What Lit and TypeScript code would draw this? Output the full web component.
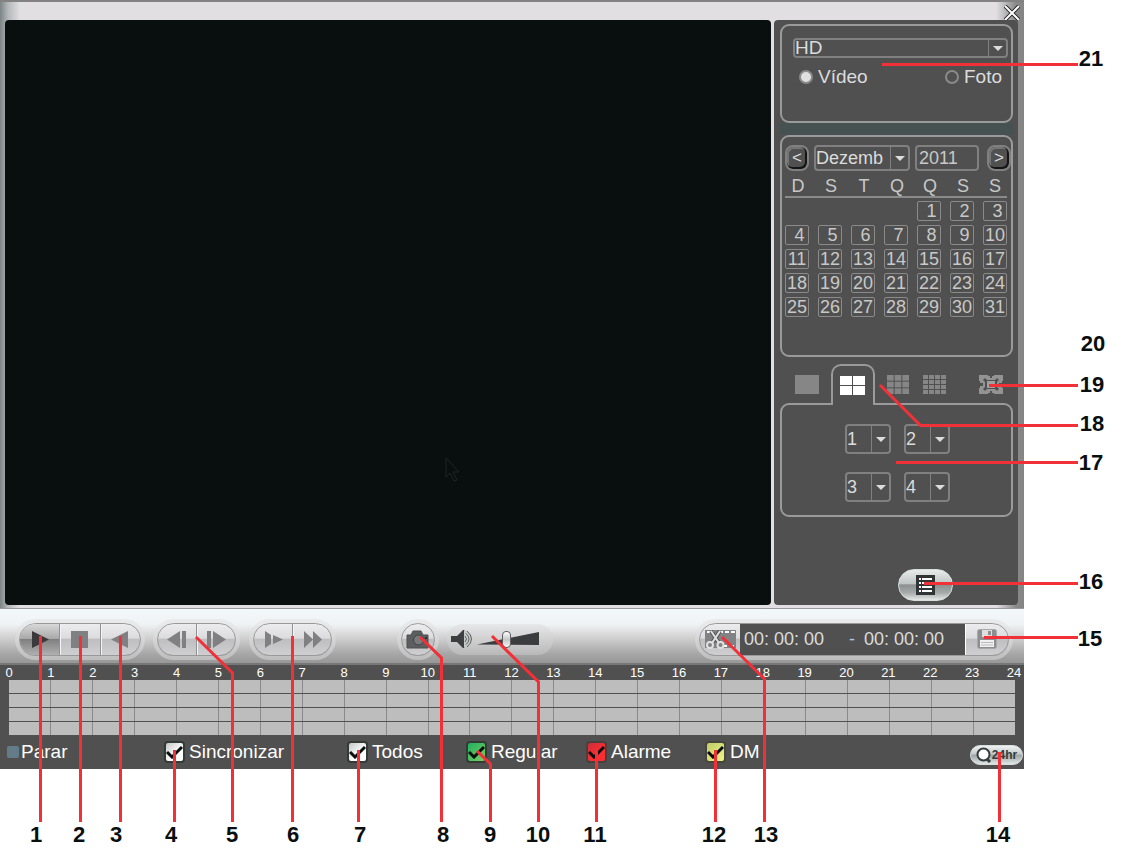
import { LitElement, html, css, svg } from "lit";
import { customElement, property } from "lit/decorators.js";
import { classMap } from "lit/directives/class-map.js";

const WEEKDAYS = ["D", "S", "T", "Q", "Q", "S", "S"];
const FIRST_WEEKDAY = 4;
const DAYS = 31;
const HOURS = Array.from({ length: 25 }, (_, i) => i);

const FILTERS = [
  { id: "sync", label: "Sincronizar", tone: "white" },
  { id: "all", label: "Todos", tone: "white" },
  { id: "regular", label: "Regular", tone: "green" },
  { id: "alarm", label: "Alarme", tone: "red" },
  { id: "motion", label: "DM", tone: "yellow" },
];

/* Leader lines and the numbers at their ends. */
const CALLOUTS = [
  { n: 1, x: 36, y: 842, line: "40.5,636 40.5,822" },
  { n: 2, x: 79, y: 842, line: "80.5,636 80.5,822" },
  { n: 3, x: 116, y: 842, line: "120.5,636 120.5,822" },
  { n: 4, x: 171, y: 842, line: "174.5,750 174.5,822" },
  { n: 5, x: 232, y: 842, line: "196,637 232.5,673 232.5,822" },
  { n: 6, x: 293, y: 842, line: "292.5,636 292.5,822" },
  { n: 7, x: 360, y: 842, line: "358.5,750 358.5,822" },
  { n: 8, x: 443, y: 842, line: "420,637 441.5,658 441.5,822" },
  { n: 9, x: 490, y: 842, line: "477,751 490.5,764 490.5,822" },
  { n: 10, x: 538, y: 842, line: "492,636 538.5,682 538.5,822" },
  { n: 11, x: 595, y: 842, line: "596.5,751 596.5,822" },
  { n: 12, x: 714, y: 842, line: "715.5,750 715.5,822" },
  { n: 13, x: 766, y: 842, line: "722,637 764.5,679 764.5,822" },
  { n: 14, x: 998, y: 842, line: "999.5,752 999.5,822" },
  { n: 15, x: 1090, y: 646, line: "984,637.5 1078,637.5" },
  { n: 16, x: 1091, y: 589, line: "924,583.5 1078,583.5" },
  { n: 17, x: 1091, y: 470, line: "896,462.5 1078,462.5" },
  { n: 18, x: 1092, y: 431, line: "880,385 920.5,425.5 1078,425.5" },
  { n: 19, x: 1092, y: 392, line: "989,385.5 1078,385.5" },
  { n: 20, x: 1093, y: 351, line: "" },
  { n: 21, x: 1091, y: 66, line: "882,64.5 1078,64.5" },
];

const base = css`
  * {
    box-sizing: border-box;
  }
  button,
  input,
  select {
    font: inherit;
    color: inherit;
    margin: 0;
    padding: 0;
    border: 0;
    background: none;
    appearance: none;
    border-radius: 0;
  }
  svg {
    display: block;
  }
`;

@customElement("dvr-select")
class DvrSelect extends LitElement {
  @property() label = "";
  @property({ type: Array }) options: string[] = [];

  static styles = [
    base,
    css`
      :host {
        display: grid;
        border: 2px solid #808080;
        border-radius: 4px;
        color: #dcdcdc;
      }
      .field {
        grid-area: 1 / 1;
        width: 100%;
        min-width: 0;
        line-height: 16px;
        outline: none;
      }
      .arrow {
        grid-area: 1 / 1;
        justify-self: end;
        display: flex;
        align-items: center;
        justify-content: center;
        width: 18px;
        border-left: 1px solid #808080;
        pointer-events: none;
      }
      .arrow::after {
        content: "";
        border: 5px solid transparent;
        border-top-color: #dcdcdc;
        border-bottom-width: 0;
      }
    `,
  ];

  render() {
    return html`
      <select class="field" aria-label=${this.label}>
        ${this.options.map((o) => html`<option>${o}</option>`)}
      </select>
      <span class="arrow"></span>
    `;
  }
}

@customElement("dvr-calendar")
class DvrCalendar extends LitElement {
  static styles = [
    base,
    css`
      :host {
        display: block;
        color: #c8c8c8;
        font-size: 18px;
      }
      .nav {
        display: flex;
        gap: 5px;
        height: 26px;
      }
      .step {
        width: 24px;
        border: 2px solid #808080;
        border-radius: 8px;
        box-shadow: inset -1px -1px 0 1px #151515, inset 1px 1px 0 1px #747474;
        font-size: 17px;
        line-height: 20px;
        color: #dcdcdc;
      }
      .next {
        margin-left: auto;
      }
      .month {
        width: 96px;
      }
      .year {
        width: 64px;
        padding-left: 2px;
        border: 2px solid #808080;
        border-radius: 4px;
      }
      .days {
        border-collapse: collapse;
      }
      .head {
        height: 26px;
        padding: 5px 7px 1px 0;
        border-bottom: 2px solid #8a8a8a;
        font-weight: 400;
        line-height: 18px;
      }
      .head:last-child {
        padding-right: 0;
      }
      .cell {
        padding: 3px 9px 1px 0;
      }
      .cell:last-child {
        padding-right: 0;
      }
      .day {
        display: block;
        width: 24px;
        height: 20px;
        border: 1px solid #8a8a8a;
        border-radius: 2px;
        line-height: 18px;
        text-align: center;
      }
      .single {
        padding-left: 5px;
      }
    `,
  ];

  render() {
    const weeks = Array.from({ length: 5 }, (_, w) =>
      WEEKDAYS.map((_, d) => w * 7 + d - FIRST_WEEKDAY + 1)
    );
    return html`
      <div class="nav">
        <button class="step" aria-label="Mês anterior">&lt;</button>
        <dvr-select class="month" label="Mês" .options=${["Dezemb"]}></dvr-select>
        <input class="year" aria-label="Ano" value="2011" />
        <button class="step next" aria-label="Próximo mês">&gt;</button>
      </div>
      <table class="days">
        <thead>
          <tr>
            ${WEEKDAYS.map((d) => html`<th class="head">${d}</th>`)}
          </tr>
        </thead>
        <tbody>
          ${weeks.map(
            (week) => html`<tr>
              ${week.map(
                (day) => html`<td class="cell">
                  ${day > 0 && day <= DAYS
                    ? html`<button class=${classMap({ day: true, single: day < 10 })}>${day}</button>`
                    : ""}
                </td>`
              )}
            </tr>`
          )}
        </tbody>
      </table>
    `;
  }
}

@customElement("dvr-side")
class DvrSide extends LitElement {
  static styles = [
    base,
    css`
      :host {
        display: flex;
        flex-direction: column;
        padding: 4px 5px 4px 6px;
        border-radius: 4px;
        background: #505050;
        color: #dcdcdc;
        font-size: 19px;
      }
      .group {
        border: 2px solid #9a9a9a;
        border-radius: 9px;
      }
      .source {
        height: 99px;
        padding: 12px 3px 0 11px;
      }
      .device {
        height: 20px;
      }
      .media {
        display: flex;
        justify-content: space-between;
        padding: 8px 6px 0;
      }
      .choice {
        display: flex;
        align-items: center;
        gap: 5px;
        line-height: 22px;
      }
      .radio {
        width: 14px;
        height: 14px;
        border: 2px solid #8a8a8a;
        border-radius: 50%;
      }
      .radio:checked {
        background: #e0e0e0;
      }
      .gap {
        height: 12px;
        background: #465151;
      }
      .dates {
        height: 222px;
        padding: 8px 0 0 3px;
      }
      .tabs {
        display: flex;
        align-items: center;
        gap: 12px;
        height: 41px;
        margin: 7px 0 -2px;
        padding: 0 10px 0 15px;
        z-index: 1;
      }
      .tab {
        width: 24px;
        color: #868686;
      }
      .tab.active {
        width: 44px;
        height: 41px;
        padding: 0 0 1px 7px;
        border: 2px solid #9a9a9a;
        border-bottom: 0;
        border-radius: 10px 10px 0 0;
        background: #505050;
        color: #fff;
      }
      .tab.full {
        margin-left: auto;
      }
      .channels {
        display: grid;
        grid-template-columns: 46px 46px;
        grid-auto-rows: 30px;
        gap: 18px 13px;
        justify-content: center;
        height: 114px;
        padding: 19px 0 0 2px;
        font-size: 18px;
      }
      .list {
        display: grid;
        place-items: center;
        align-self: flex-end;
        width: 55px;
        height: 32px;
        margin: auto 60px 0 0;
        border: 1px solid #d8dede;
        border-radius: 16px;
        background: linear-gradient(#e8eceb, #c0c6c5 45%, #8c9190 50%, #a4aaa9 75%, #e4e8e7);
      }
    `,
  ];

  private tiles(cols: number, rows: number, w: number) {
    const cw = (w - (cols - 1)) / cols;
    const ch = (19 - (rows - 1)) / rows;
    return html`<svg width="25" height="19" viewBox="0 0 25 19" fill="currentColor">
      ${Array.from(
        { length: cols * rows },
        (_, i) => svg`<rect x=${(i % cols) * (cw + 1)} y=${Math.floor(i / cols) * (ch + 1)} width=${cw} height=${ch} />`
      )}
    </svg>`;
  }

  render() {
    return html`
      <section class="group source">
        <dvr-select class="device" label="Origem" .options=${["HD"]}></dvr-select>
        <div class="media">
          <label class="choice"><input class="radio" type="radio" name="media" checked />Vídeo</label>
          <label class="choice"><input class="radio" type="radio" name="media" />Foto</label>
        </div>
      </section>
      <div class="gap"></div>
      <section class="group dates"><dvr-calendar></dvr-calendar></section>
      <div class="tabs">
        <button class="tab" aria-label="1 canal">${this.tiles(1, 1, 24)}</button>
        <button class="tab active" aria-label="4 canais">${this.tiles(2, 2, 25)}</button>
        <button class="tab" aria-label="9 canais">${this.tiles(3, 3, 22)}</button>
        <button class="tab" aria-label="16 canais">${this.tiles(4, 4, 23)}</button>
        <button class="tab full" aria-label="Tela cheia">
          <svg width="24" height="19" viewBox="0 0 24 19">
            <rect width="24" height="19" fill="#939393" />
            <path d="M9 0h6v1h-2v2h-2V1H9zM9 19h6v-1h-2v-2h-2v2H9z" fill="#505050" />
            <path d="M0 6h1v2h3v3H1v2H0zM24 6h-1v2h-3v3h3v2h1z" fill="#505050" />
            <path d="M6 3l2 2h8l2-2 2 2-2 2v5l2 2-2 2-2-2H8l-2 2-2-2 2-2V7L4 5z" fill="#505050" />
            <rect x="8" y="6" width="8" height="7" fill="#a0a0a0" />
          </svg>
        </button>
      </div>
      <section class="group channels">
        ${["1", "2", "3", "4"].map(
          (c) => html`<dvr-select label="Canal ${c}" .options=${[c]}></dvr-select>`
        )}
      </section>
      <button class="list" aria-label="Lista de arquivos">
        <svg width="19" height="20" viewBox="0 0 19 20">
          <rect width="19" height="20" fill="#303434" />
          <path d="M3 4h2M3 8h2M3 12h2M3 16h2M6 4h10M6 8h10M6 12h10M6 16h10" stroke="#fff" stroke-width="2" />
        </svg>
      </button>
    `;
  }
}

@customElement("dvr-toolbar")
class DvrToolbar extends LitElement {
  static styles = [
    base,
    css`
      :host {
        display: flex;
        align-items: center;
        height: 57px;
        padding: 6px 15px 0 19px;
        border-top: 1px solid #9a9a9a;
        border-bottom: 2px solid #777;
        background: linear-gradient(#f3f8fb, #f0f3f5 28%, #d2d2d2 52%, #a8a8a8 82%, #979797);
      }
      .pill {
        display: flex;
        height: 33px;
        overflow: hidden;
        border: 1px solid #98999b;
        border-radius: 17px;
        background: linear-gradient(#ececee, #dcdcde 45%, #bfbfc1 50%, #cfcfd1);
        outline: 4px solid rgba(224, 224, 226, 0.5);
      }
      .play {
        width: 122px;
        margin-right: 16px;
      }
      .step {
        width: 79px;
        margin-right: 17px;
      }
      .speed {
        width: 79px;
        margin-right: 69px;
      }
      .button {
        display: grid;
        flex: 1;
        place-items: center;
        color: #808082;
      }
      .button + .button {
        border-left: 1px solid #909090;
        box-shadow: inset 1px 0 0 #f4f4f4;
      }
      .pressed {
        background: linear-gradient(#d8d8d8, #a8a8a8 48%, #808080 50%, #b0b0b0);
        color: #3a3a3c;
      }
      .camera {
        width: 34px;
        margin-right: 12px;
      }
      .volume {
        display: flex;
        align-items: center;
        gap: 4px;
        width: 106px;
        height: 31px;
        padding-left: 4px;
        border-radius: 16px;
        background: rgba(215, 215, 217, 0.4);
      }
      .level {
        display: grid;
        align-items: center;
        width: 62px;
      }
      .wedge,
      .slider {
        grid-area: 1 / 1;
      }
      .slider {
        width: 100%;
        height: 17px;
      }
      .slider::-webkit-slider-thumb {
        appearance: none;
        width: 9px;
        height: 17px;
        border: 1px solid #606060;
        border-radius: 4px;
        background: linear-gradient(#fff, #c4c8c8 50%, #f4f4f4);
      }
      .clip {
        width: 310px;
        margin-left: auto;
      }
      .cut {
        flex: none;
        width: 40px;
      }
      .range {
        display: flex;
        align-items: center;
        flex: none;
        width: 225px;
        background: #505050;
        color: #dcdcdc;
        font-size: 18px;
      }
      .time {
        width: 88px;
        margin-left: 4px;
      }
      .dash {
        width: 32px;
        padding-left: 17px;
        color: #a8c8f0;
      }
      .dash + .time {
        margin-left: 0;
      }
      .save {
        border-left: 1px solid #fff;
      }
    `,
  ];

  render() {
    return html`
      <div class="pill play">
        <button class="button pressed" aria-label="Reproduzir">
          <svg width="18" height="17" viewBox="0 0 18 17" fill="currentColor"><path d="M1 0l17 8.500L1 17z" /></svg>
        </button>
        <button class="button" aria-label="Parar">
          <svg width="17" height="17" fill="currentColor"><path d="M0 0h17v17H0z" /></svg>
        </button>
        <button class="button" aria-label="Reproduzir para trás">
          <svg width="18" height="17" viewBox="0 0 18 17" fill="currentColor"><path d="M17 0L0 8.500 17 17z" /></svg>
        </button>
      </div>
      <div class="pill step">
        <button class="button" aria-label="Quadro anterior">
          <svg width="20" height="17" viewBox="0 0 20 17" fill="currentColor"><path d="M13 0L0 8.500 13 17zM15 0h4v17h-4z" /></svg>
        </button>
        <button class="button" aria-label="Próximo quadro">
          <svg width="20" height="17" viewBox="0 0 20 17" fill="currentColor"><path d="M7 0l13 8.500L7 17zM1 0h4v17H1z" /></svg>
        </button>
      </div>
      <div class="pill speed">
        <button class="button" aria-label="Lento">
          <svg width="20" height="17" viewBox="0 0 20 17" fill="currentColor"><path d="M2 0l6 4v9l-6 4zM10 4l10 4.500L10 13z" /></svg>
        </button>
        <button class="button" aria-label="Rápido">
          <svg width="19" height="17" viewBox="0 0 19 17" fill="currentColor"><path d="M1 0l9 8.500L1 17zM10 0l9 8.500-9 8.500z" /></svg>
        </button>
      </div>
      <div class="pill camera">
        <button class="button" aria-label="Capturar imagem">
          <svg width="24" height="19" viewBox="0 0 24 19">
            <path d="M1 5h4l2-4h8l2 4h5v13H1z" fill="#5c5e60" stroke="#4c4e50" />
            <circle cx="12.500" cy="10" r="5" fill="#77797b" stroke="#404244" />
            <path d="M19 7h2v2h-2z" fill="#303030" />
          </svg>
        </button>
      </div>
      <div class="volume">
        <svg width="22" height="18" viewBox="0 0 22 18">
          <path d="M0 6h6l6-6h2v18h-2l-6-6H0z" fill="#3c3e40" />
          <path d="M13 0l5 2 3 4v6l-3 4-5 2" fill="#c8caca" />
          <path d="M14 6q3 3 0 6M15 3.500q6 5.500 0 11M16 1q9 8 0 16" fill="none" stroke="#5c5e60" />
        </svg>
        <div class="level">
          <svg class="wedge" width="62" height="15" viewBox="0 0 62 15"><path d="M0 12.500L62 0v13z" fill="#3a3c3e" /></svg>
          <input class="slider" type="range" min="0" max="100" value="48" aria-label="Volume" />
        </div>
      </div>
      <div class="pill clip">
        <button class="button cut" aria-label="Cortar trecho">
          <svg width="31" height="19" viewBox="0 0 31 19">
            <path d="M0 0h31v18H0z" fill="#808284" />
            <path d="M2 2h7M14 2h4M20 2h4M26 2h4M18 16h4M25 16h4" stroke="#fff" stroke-width="2" />
            <path d="M6 1l8 12M15 1L7 13" stroke="#555" stroke-width="4" />
            <path d="M6 1l8 12M15 1L7 13" stroke="#e0e0e0" stroke-width="2" />
            <g fill="#808284" stroke="#e0e0e0" stroke-width="2"><circle cx="5" cy="15" r="3" /><circle cx="15.500" cy="15" r="3" /></g>
          </svg>
        </button>
        <div class="range">
          <input class="time" aria-label="Início" value="00: 00: 00" />
          <span class="dash">-</span>
          <input class="time" aria-label="Fim" value="00: 00: 00" />
        </div>
        <button class="button save" aria-label="Salvar">
          <svg width="20" height="20" viewBox="0 0 20 20">
            <rect x=".5" y=".5" width="19" height="19" rx="2" fill="#8c8e90" stroke="#a8a8aa" />
            <path d="M5 1h10v7H5z" fill="#dedee0" />
            <path d="M11 2h3v4h-3z" fill="#8c8e90" />
            <path d="M3 11h14v7H3z" fill="#f0f0f2" />
            <path d="M4 13.500h12M4 16h12" stroke="#b8babc" />
          </svg>
        </button>
      </div>
    `;
  }
}

@customElement("dvr-timeline")
class DvrTimeline extends LitElement {
  static styles = [
    base,
    css`
      :host {
        display: block;
        background: #505050;
        color: #fff;
      }
      .hours {
        display: flex;
        justify-content: space-between;
        height: 15px;
        padding: 0 10px 0 9px;
        font-size: 13px;
        line-height: 15px;
      }
      .hour {
        display: flex;
        justify-content: center;
        width: 0;
      }
      .tracks {
        display: grid;
        gap: 1px;
        padding: 0 9px;
      }
      .track {
        display: flex;
        height: 13px;
        background: #bdbdbd;
      }
      .slot {
        flex: 1;
        border-right: 1px solid #8a8a8a;
      }
      .slot:last-child {
        border-right: 0;
      }
      .status {
        display: grid;
        grid-template-columns: 157fr 183fr 119fr 120fr 119fr 265fr 54px;
        align-items: center;
        height: 34px;
        padding-left: 7px;
        font-size: 19px;
        line-height: 22px;
      }
      .item {
        display: flex;
        align-items: center;
        gap: 4px;
      }
      .stopped {
        gap: 2px;
      }
      .mark {
        width: 12px;
        height: 12px;
        border-radius: 2px;
        background: #647c88;
      }
      .box {
        display: grid;
      }
      .check,
      .tick {
        grid-area: 1 / 1;
      }
      .check {
        width: 21px;
        height: 22px;
        border: 2px solid #343a36;
        border-radius: 4px;
      }
      .tick {
        place-self: center;
        pointer-events: none;
      }
      .white {
        background: linear-gradient(135deg, #c4c6c6, #fff 60%);
      }
      .green {
        background: linear-gradient(135deg, #20b060, #7ccc62);
      }
      .red {
        background: linear-gradient(135deg, #c83038, #ff2c34 60%);
        border-color: #48403e;
      }
      .yellow {
        background: linear-gradient(135deg, #c0cc68, #eef488);
        border-color: #48463c;
      }
      .zoom {
        display: flex;
        align-items: center;
        justify-content: center;
        width: 53px;
        height: 20px;
        margin-top: 5px;
        border: 1px solid #d8dede;
        border-radius: 10px;
        background: linear-gradient(#f0f2f2, #c4caca 45%, #9ca2a2 50%, #e0e4e4);
        color: #343c3c;
        font-size: 12px;
        font-weight: 700;
        line-height: 16px;
      }
    `,
  ];

  render() {
    return html`
      <div class="hours">${HOURS.map((h) => html`<span class="hour">${h}</span>`)}</div>
      <div class="tracks">
        ${[0, 1, 2, 3].map(
          () => html`<div class="track">${HOURS.slice(1).map(() => html`<span class="slot"></span>`)}</div>`
        )}
      </div>
      <div class="status">
        <span class="item stopped"><span class="mark"></span>Parar</span>
        ${FILTERS.map(
          (f) => html`<label class="item">
            <span class="box">
              <input class="check ${f.tone}" type="checkbox" name=${f.id} checked />
              <svg class="tick" width="17" height="14" viewBox="0 0 17 14"><path d="M1 7l5 5L16 2" fill="none" stroke="#0a0f0e" stroke-width="3" /></svg>
            </span>
            ${f.label}
          </label>`
        )}
        <button class="zoom">
          <svg width="16" height="16" viewBox="0 0 16 16">
            <path d="M10 11l4 4" stroke="#343c3c" stroke-width="3" />
            <circle cx="7.500" cy="7.500" r="6" fill="#fff" stroke="#343c3c" stroke-width="2" />
          </svg>
          24hr
        </button>
      </div>
    `;
  }
}

@customElement("app-root")
class AppRoot extends LitElement {
  static styles = [
    base,
    css`
      :host {
        display: block;
        position: relative;
        padding: 0 98px 87px 0;
        background: #fff;
        font-family: "Liberation Sans", Arial, sans-serif;
      }
      .frame {
        border-top: 2px solid #838182;
        background: linear-gradient(to right, #7c8486, #b4b8ba 8px, #e1dfe2 20px, #e1dfe2 calc(100% - 28px), #8a898a calc(100% - 8px), #858485);
      }
      .title {
        display: flex;
        justify-content: flex-end;
        height: 18px;
        padding: 3px 4px 0 0;
      }
      .close {
        width: 16px;
        height: 16px;
      }
      .main {
        display: flex;
        gap: 3px;
        padding: 0 6px 3px 5px;
      }
      .video {
        position: relative;
        flex: 1;
        aspect-ratio: 766 / 585;
        border-radius: 4px;
        background: #090f0e;
      }
      .side {
        width: 244px;
      }
      .cursor {
        position: absolute;
        left: 57.500%;
        top: 74.700%;
      }
      .callouts {
        position: absolute;
        top: 0;
        left: 0;
        width: 100%;
        pointer-events: none;
        z-index: 2;
      }
      .leader {
        fill: none;
        stroke: #f23038;
        stroke-width: 3px;
      }
      .number {
        fill: #090f0e;
        font-size: 22px;
        font-weight: 700;
        text-anchor: middle;
      }
    `,
  ];

  render() {
    return html`
      <div class="frame">
        <div class="title">
          <button class="close" aria-label="Fechar">
            <svg width="16" height="16" viewBox="0 0 16 16">
              <path d="M1 1l14 14M15 1L1 15" stroke="#222" stroke-width="4" />
              <path d="M1 1l14 14M15 1L1 15" stroke="#fff" stroke-width="2" />
            </svg>
          </button>
        </div>
        <div class="main">
          <div class="video">
            <svg class="cursor" width="16" height="26" viewBox="0 0 16 26">
              <path d="M1 1v19l4-4 4 8 3-1-4-8h6z" fill="none" stroke="#1e2423" />
            </svg>
          </div>
          <dvr-side class="side"></dvr-side>
        </div>
      </div>
      <dvr-toolbar></dvr-toolbar>
      <dvr-timeline></dvr-timeline>
      <svg class="callouts" viewBox="0 0 1122 856">
        ${CALLOUTS.map(
          (c) => svg`<polyline class="leader" points=${c.line} /><text class="number" x=${c.x} y=${c.y}>${c.n}</text>`
        )}
      </svg>
    `;
  }
}
